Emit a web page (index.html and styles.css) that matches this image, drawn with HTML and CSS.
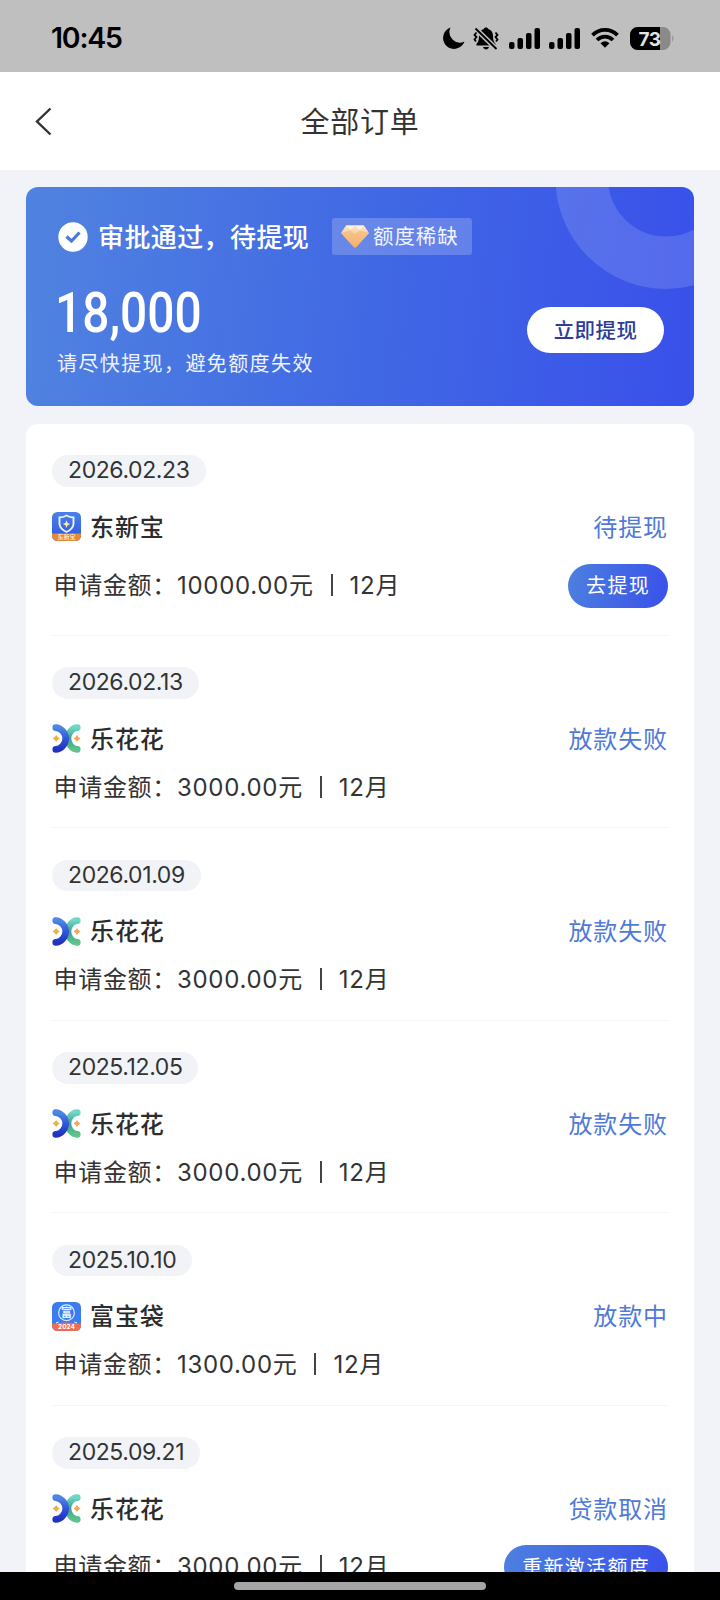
FILE: index.html
```html
<!DOCTYPE html>
<html lang="zh-CN">
<head>
<meta charset="utf-8">
<title>全部订单</title>
<link rel="stylesheet" href="styles.css">
</head>
<body>
<svg width="0" height="0" class="defs">
  <defs>
    <linearGradient id="blueArc" x1="0" y1="0" x2="0" y2="1"><stop offset="0" stop-color="#4f86e4"/><stop offset=".5" stop-color="#3158d4"/><stop offset="1" stop-color="#2231c4"/></linearGradient>
    <linearGradient id="greenArc" x1="0" y1="0" x2="0" y2="1"><stop offset="0" stop-color="#6fd8c4"/><stop offset=".5" stop-color="#3d9f94"/><stop offset="1" stop-color="#5cc48a"/></linearGradient>
    <linearGradient id="tile" x1="0" y1="0" x2="0" y2="1"><stop offset="0" stop-color="#4a80ea"/><stop offset="1" stop-color="#2f55e0"/></linearGradient>
    <linearGradient id="gem" x1="0" y1="0" x2="0" y2="1"><stop offset="0" stop-color="#fbe6cd"/><stop offset="1" stop-color="#f3a95b"/></linearGradient>
    <clipPath id="tileClip"><rect width="29" height="29" rx="5.5"/></clipPath>
    <symbol id="lehuahua" viewBox="0 0 29 29">
      <path d="M25.300 3.600C20 3.800 16 9 16 14.500S20 25.200 25.300 25.400" fill="none" stroke="url(#greenArc)" stroke-width="6.600" stroke-linecap="round"/>
      <path d="M3.700 3.600C9 3.800 13.700 9 13.700 14.500S9 25.200 3.700 25.400" fill="none" stroke="url(#blueArc)" stroke-width="6.600" stroke-linecap="round"/>
      <path d="M4.200 10.900L5.600 13.100 7.800 14.500 5.600 15.900 4.200 18.100 2.800 15.900 .6 14.500 2.800 13.100Z" fill="#e9b040"/>
      <path d="M25 10.900L26.400 13.100 28.600 14.500 26.400 15.900 25 18.100 23.600 15.900 21.400 14.500 23.600 13.100Z" fill="#f2a65c"/>
    </symbol>
    <symbol id="bars" viewBox="0 0 31 21">
      <rect y="14" width="5.500" height="7" rx="2"/><rect x="8.500" y="10" width="5.500" height="11" rx="2"/><rect x="17" y="5" width="5.500" height="16" rx="2"/><rect x="25.500" y="0" width="5.500" height="21" rx="2"/>
    </symbol>
  </defs>
</svg>
<div class="screen">
  <header class="status-bar">
    <span class="clock">10:45</span>
    <div class="status-icons">
      <svg class="moon" width="22" height="22" viewBox="0 0 22 22"><path d="M7.500.5A11 11 0 1 0 21.500 14.500A10.500 10.500 0 0 1 7.500.5Z"/></svg>
      <svg class="bell" width="26" height="23" viewBox="0 0 26 23"><path d="M13 .5c1.200 0 2 .7 2.300 1.600 3.100 1 4.700 3.600 4.700 6.900 0 4 .8 6 2.500 7.800v1.700h-19v-1.700C5.200 15 6 13 6 9c0-3.300 1.600-5.900 4.700-6.900C11 1.200 11.800.5 13 .5ZM10 20h6c-.5 1.600-1.500 2.400-3 2.400S10.500 21.600 10 20Z"/><path d="M2.500 1.500L23.500 22" stroke="#bfbfbf" stroke-width="5"/><path d="M2.500 1.500L23.500 22" stroke="#000" stroke-width="1.800"/><path d="M3.500 5.500L1.500 8l2 2-2 2.500 1.500 2M22.500 5.500l2 2.500-2 2 2 2.500-1.500 2" fill="none" stroke="#000" stroke-width="1.800"/></svg>
      <svg class="signal" width="31" height="21"><use href="#bars"/></svg>
      <svg class="signal" width="31" height="21"><use href="#bars"/></svg>
      <svg class="wifi" width="28" height="20" viewBox="0 0 28 20"><g fill="none" stroke="#000" stroke-width="3.800"><path d="M1.500 7.200C8.500.2 19.500.2 26.500 7.200"/><path d="M6 12C10.700 7.500 17.300 7.500 22 12"/></g><path d="M9.500 15.200Q14 11.400 18.500 15.200L14 19.800Z"/></svg>
      <svg class="battery" width="45" height="23" viewBox="0 0 45 23"><path d="M7.500 0H30V23H7.500A7.500 7.500 0 0 1 0 15.500V7.500A7.500 7.500 0 0 1 7.500 0Z"/><path d="M30 0h3A7.500 7.500 0 0 1 40.500 7.500v8A7.500 7.500 0 0 1 33 23h-3Z" fill="#8a8a8a"/><path d="M42 8q3 3.500 0 7Z" fill="#999"/><text x="19.500" y="18.500" class="battery-text">73</text></svg>
    </div>
  </header>
  <nav class="nav">
    <svg class="back" width="17" height="29" viewBox="0 0 17 29"><path d="M15.500 1.500L2 14.500L15.500 27.500" fill="none" stroke="#333" stroke-width="2.400"/></svg>
    <h1 class="title">全部订单</h1>
  </nav>
  <main class="content">
    <section class="banner">
      <svg class="ring" width="668" height="219"><circle cx="640" cy="-8.500" r="84.200" fill="none" stroke="#fff" stroke-opacity=".14" stroke-width="52.500"/></svg>
      <div class="banner-head">
        <svg width="30" height="30" viewBox="0 0 30 30"><circle cx="15" cy="15" r="14.700" fill="#fff"/><path d="M8.500 14.500L13.500 19L21.500 10.500" fill="none" stroke="#4b78e0" stroke-width="3.200"/></svg>
        <span class="banner-title">审批通过，待提现</span>
        <span class="tag">
          <svg width="28" height="23" viewBox="0 0 28 23"><path d="M5 .5H23L28 8L15.500 22Q14 23.400 12.500 22L0 8Z" fill="url(#gem)"/><path d="M5 .5L9.500 5 14 .5 18.500 5 23 .5Z" fill="#fff3df"/><path d="M0 8L9 5.500 14 9 19 5.500 28 8 14 22Z" fill="#f4b776" opacity=".65"/></svg>
          <span class="tag-text">额度稀缺</span></span>
      </div>
      <div class="banner-body">
        <div>
          <div class="total">18,000</div>
          <div class="hint">请尽快提现，避免额度失效</div>
        </div>
        <button class="withdraw">立即提现</button>
      </div>
    </section>
    <section class="orders">
      <article class="order order-action">
        <span class="date">2026.02.23</span>
        <div class="row name-row">
          <svg class="logo" width="29" height="29" viewBox="0 0 29 29"><g clip-path="url(#tileClip)"><rect width="29" height="29" fill="url(#tile)"/><rect y="21.500" width="29" height="8" fill="#e88735"/></g><path d="M14.500 3.500Q18 5.500 21.500 5.500V12Q21 17 14.500 20Q8 17 7.500 12V5.500Q11 5.500 14.500 3.500Z" fill="none" stroke="#e8f4ff" stroke-width="1.900"/><path d="M14.500 8.300L15.600 11 18.300 12.100 15.600 13.200 14.500 16 13.400 13.200 10.700 12.100 13.400 11Z" fill="#ffeaa5"/><text x="14.500" y="27.200" class="logo-text">东新宝</text></svg>
          <span class="name">东新宝</span><span class="state">待提现</span>
        </div>
        <div class="row amount-row"><p class="amount">申请金额：<span class="num">10000.00</span>元<i class="bar"></i><span class="num">12</span>月</p><button class="action">去提现</button></div>
      </article>
      <article class="order">
        <span class="date">2026.02.13</span>
        <div class="row name-row"><svg class="logo" width="29" height="29"><use href="#lehuahua"/></svg><span class="name">乐花花</span><span class="state">放款失败</span></div>
        <div class="row amount-row"><p class="amount">申请金额：<span class="num">3000.00</span>元<i class="bar"></i><span class="num">12</span>月</p></div>
      </article>
      <article class="order">
        <span class="date">2026.01.09</span>
        <div class="row name-row"><svg class="logo" width="29" height="29"><use href="#lehuahua"/></svg><span class="name">乐花花</span><span class="state">放款失败</span></div>
        <div class="row amount-row"><p class="amount">申请金额：<span class="num">3000.00</span>元<i class="bar"></i><span class="num">12</span>月</p></div>
      </article>
      <article class="order">
        <span class="date">2025.12.05</span>
        <div class="row name-row"><svg class="logo" width="29" height="29"><use href="#lehuahua"/></svg><span class="name">乐花花</span><span class="state">放款失败</span></div>
        <div class="row amount-row"><p class="amount">申请金额：<span class="num">3000.00</span>元<i class="bar"></i><span class="num">12</span>月</p></div>
      </article>
      <article class="order">
        <span class="date">2025.10.10</span>
        <div class="row name-row">
          <svg class="logo" width="29" height="29" viewBox="0 0 29 29"><g clip-path="url(#tileClip)"><rect width="29" height="29" fill="#3b7cf0"/><path d="M0 22Q14.500 19 29 22V29H0Z" fill="#ee6e51"/></g><circle cx="14.500" cy="10.800" r="7.900" fill="none" stroke="#d9ecff" stroke-width="1.200"/><text x="14.500" y="15" class="seal">富</text><path d="M4 21l2.500-1M25 21l-2.500-1" stroke="#fff"/><text x="14.500" y="27.300" class="logo-year">2024</text></svg>
          <span class="name">富宝袋</span><span class="state">放款中</span>
        </div>
        <div class="row amount-row"><p class="amount">申请金额：<span class="num">1300.00</span>元<i class="bar"></i><span class="num">12</span>月</p></div>
      </article>
      <article class="order order-action">
        <span class="date">2025.09.21</span>
        <div class="row name-row"><svg class="logo" width="29" height="29"><use href="#lehuahua"/></svg><span class="name">乐花花</span><span class="state">贷款取消</span></div>
        <div class="row amount-row"><p class="amount">申请金额：<span class="num">3000.00</span>元<i class="bar"></i><span class="num">12</span>月</p><button class="action">重新激活额度</button></div>
      </article>
    </section>
  </main>
  <footer class="home-bar"><span class="home-indicator"></span></footer>
</div>
</body>
</html>
```
FILE: styles.css
```css
* { box-sizing: border-box; }
body {
  margin: 0;
  font-family: "Noto Sans CJK SC", sans-serif;
  color: #333;
}
svg { display: block; flex: none; }
.defs { position: absolute; }
button { border: 0; padding: 0; font-family: inherit; white-space: nowrap; }
.screen {
  width: 720px;
  height: 1600px;
  overflow: hidden;
  display: flex;
  flex-direction: column;
  background: #f2f3f8;
}
.status-bar {
  flex: none;
  height: 72px;
  background: #bfbfbf;
  display: flex;
  justify-content: space-between;
  padding: 4px 45px 0 51px;
  align-items: center;
}
.clock { font: 600 28.500px/1 Inter, sans-serif; color: #000; letter-spacing: -1.200px; }
.status-icons { display: flex; align-items: center; }
.moon { margin-right: 8px; }
.bell { margin-right: 10px; }
.signal { margin-right: 9px; }
.wifi { margin: 0 11px 0 2px; }
.battery-text { font: 700 19px Inter, sans-serif; fill: #e4e4e4; text-anchor: middle; letter-spacing: -.5px; }
.nav {
  flex: none;
  height: 98px;
  background: #fff;
  display: grid;
  grid-template-columns: 60px 1fr 60px;
  align-items: center;
}
.back { margin-left: 35px; }
.title { margin: 0; padding-bottom: 3px; text-align: center; font-size: 29px; line-height: 40px; font-weight: 400; letter-spacing: .8px; }
.content { flex: 1; min-height: 0; overflow: hidden; padding: 17px 26px 0; }
.banner {
  position: relative;
  height: 219px;
  border-radius: 12px;
  overflow: hidden;
  padding: 31px 30px 0 32px;
  color: #fff;
  background: linear-gradient(96deg, #5083e0 0%, #4169e4 50%, #3950ea 100%);
}
.ring { position: absolute; left: 0; top: 0; }
.banner-head { position: relative; display: flex; align-items: center; height: 37px; }
.banner-title { margin-left: 10px; padding-bottom: 3px; width: 234px; font-size: 26px; font-weight: 500; letter-spacing: .4px; white-space: nowrap; }
.tag {
  display: flex;
  align-items: center;
  gap: 4px;
  width: 140px;
  height: 37px;
  padding-left: 9px;
  border-radius: 3px;
  background: rgba(255,255,255,.2);
  font-size: 20.500px;
  letter-spacing: .9px;
  white-space: nowrap;
  color: #f1f5ff;
}
.tag-text { padding-bottom: 3px; }
.banner-body { position: relative; display: flex; justify-content: space-between; padding-top: 30px; }
.total {
  width: fit-content;
  margin-left: -3px;
  font: 500 55px/56px Roboto, sans-serif;
  transform: scaleX(.87);
  transform-origin: 0 50%;
}
.hint { margin: 7px 0 0 -1px; font-size: 20px; line-height: 30px; letter-spacing: 1.400px; color: #eef3ff; }
.withdraw {
  width: 137px;
  height: 46px;
  margin-top: 22px;
  padding-bottom: 2px;
  border-radius: 23px;
  background: #fff;
  color: #2c3c98;
  font-size: 20.500px;
  font-weight: 500;
  letter-spacing: .4px;
}
.orders { margin-top: 18px; padding: 0 26px; border-radius: 12px 12px 0 0; background: #fff; }
.order { height: 192.500px; padding-top: 31.500px; border-bottom: 1.500px solid #f5f5f7; }
.order:first-child { height: 211.500px; padding-top: 31px; }
.date {
  display: block;
  width: fit-content;
  height: 31.500px;
  padding: 0 16px;
  border-radius: 16px;
  background: #f2f3f7;
  font: 400 23px/31px Inter, sans-serif;
  letter-spacing: -.4px;
}
.row { display: flex; align-items: center; }
.name-row { height: 36px; margin-top: 22px; }
.name { margin-left: 9px; padding-bottom: 3px; font-size: 24px; font-weight: 500; letter-spacing: .9px; color: #2c2c2c; }
.state { margin-left: auto; padding-bottom: 3px; font-size: 24px; letter-spacing: .9px; color: #4f7ad8; }
.amount-row { height: 32px; margin-top: 15px; }
.order-action .amount-row { height: 44px; margin-top: 19px; }
.order + .order-action .amount-row { margin-top: 18.500px; }
.amount { margin: 0; padding: 0 0 2px 1.500px; font-size: 24px; line-height: 32px; letter-spacing: .7px; white-space: nowrap; }
.num { font-family: Inter, sans-serif; }
.bar { display: inline-block; width: 2px; height: 22px; margin: 0 17px; background: #444; vertical-align: -2px; }
.action {
  margin-left: auto;
  height: 44px;
  padding: 0 18px 2px;
  border-radius: 22px;
  background: linear-gradient(100deg, #4d80df, #3950ea);
  color: #fff;
  font-size: 20px;
  letter-spacing: 1.300px;
}
.logo-text { font: 500 6px "Noto Sans CJK SC", sans-serif; fill: #fff0d8; text-anchor: middle; }
.seal { font: 700 11px "Noto Sans CJK SC", sans-serif; fill: #e8f4ff; text-anchor: middle; }
.logo-year { font: 700 6.500px Inter, sans-serif; fill: #fff; text-anchor: middle; }
.home-bar { flex: none; height: 28px; background: #000; display: flex; justify-content: center; padding-top: 10px; }
.home-indicator { width: 252px; height: 8px; border-radius: 4px; background: #a5a5a5; }
```
